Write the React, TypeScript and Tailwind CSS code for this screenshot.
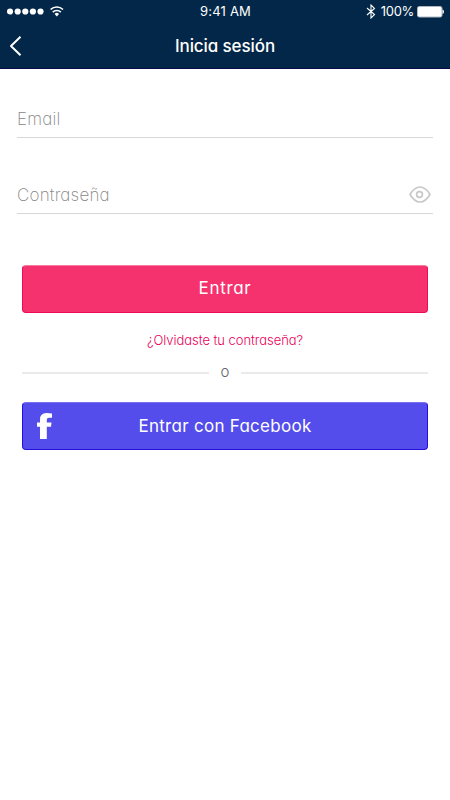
import { ReactNode } from "react";

const StatusBar = () => (
  <div className="flex h-[23px] items-center text-[13px] text-white">
    <div className="flex flex-1 items-center pl-[7px]">
      <svg width="60" height="14" viewBox="0 0 60 14" fill="currentColor">
        {[3, 10.7, 18.3, 25.9, 33.5].map((cx) => (
          <circle key={cx} cx={cx} cy="6.5" r="3.1" />
        ))}
        <g fill="none" stroke="currentColor" strokeWidth="1.7">
          <path d="M43.6 4.500a9 9 0 0 1 12.400 0" />
          <path d="M45.800 7.200a5.600 5.600 0 0 1 8 0" />
        </g>
        <path d="M47.600 8.900a3.200 3.200 0 0 1 4.400 0l-2.200 2.500z" />
      </svg>
    </div>
    <span className="tracking-[0.2px]">9:41 AM</span>
    <div className="flex flex-1 items-center justify-end pr-[6px]">
      <svg width="10" height="15" viewBox="0 0 10 15" fill="none" stroke="currentColor" strokeWidth="1.100">
        <path d="M1 4l7.500 6.600L5 14V1l3.500 3.400L1 11" />
      </svg>
      <span className="ml-[5px] tracking-[-0.300px]">100%</span>
      <svg className="ml-[3px]" width="27" height="12" viewBox="0 0 27 12">
        <rect x="0.500" y="0.500" width="24.500" height="10.500" rx="1.800" fill="#fff" stroke="#aeb8c2" />
        <path d="M25.500 3.500q1.500.500 1.500 2.200t-1.500 2.200z" fill="#fff" />
      </svg>
    </div>
  </div>
);

const Header = () => (
  <header className="h-[69px] border-b border-[#08084a] bg-[#022748]">
    <StatusBar />
    <div className="grid h-[45px] grid-cols-[40px_1fr_40px] items-center text-white">
      <svg className="ml-[8px]" width="15" height="22" viewBox="0 0 15 22" fill="none" stroke="currentColor" strokeWidth="2" strokeLinejoin="round">
        <path d="M12.500 1.800L3 11l9.500 9.200" />
      </svg>
      <h1 className="pt-[2px] text-center text-[17px] font-medium tracking-[-0.100px]">Inicia sesión</h1>
    </div>
  </header>
);

const Field = ({ label, children }: { label: string; children?: ReactNode }) => (
  <div className="flex h-[38px] items-center justify-between border-b border-[#d8d8d8] text-[17px] font-extralight text-[#858585]">
    <span className="pt-[2px] tracking-[0.200px]">{label}</span>
    {children}
  </div>
);

const EyeIcon = () => (
  <svg className="mr-[2px]" width="22" height="17" viewBox="0 0 22 17" fill="none" stroke="#c8c8c8" strokeWidth="1.700" strokeLinejoin="round">
    <path d="M1 8.500Q5.500 1 11 1t10 7.500Q16.500 16 11 16T1 8.500z" />
    <circle cx="10.500" cy="8.500" r="2.900" />
  </svg>
);

const App = () => {
  return (
    <div className="h-[800px] bg-white font-['Inter',sans-serif] [font-feature-settings:'cv11']">
      <Header />
      <main className="px-[17px] pt-[31px]">
        <div className="flex flex-col gap-[38px]">
          <Field label="Email" />
          <Field label="Contraseña">
            <EyeIcon />
          </Field>
        </div>
        <div className="mt-[51px] flex flex-col px-[5px]">
          <button className="h-[48px] w-[406px] rounded-[4px] border border-[#ee0a55] border-t-[#f57a9c] bg-[#f5326e] pb-[1px] text-[17px] tracking-[0.700px] text-white">
            Entrar
          </button>
          <a className="mt-[17px] block text-center text-[13px] leading-[20px] font-light tracking-[-0.050px] text-[#ea005c]">
            ¿Olvidaste tu contraseña?
          </a>
          <div className="mt-[13px] flex h-[20px] items-center font-light text-[#666]">
            <span className="h-[2px] flex-1 bg-[#e9eaea]" />
            <span className="w-[32px] pb-[2px] text-center text-[15px]">o</span>
            <span className="h-[2px] flex-1 bg-[#e9eaea]" />
          </div>
          <button className="mt-[19px] grid h-[48px] w-[406px] grid-cols-[44px_1fr_44px] items-center rounded-[4px] border border-[#2410dc] border-t-[#7770ef] bg-[#544dec] text-[17px] tracking-[0.280px] text-white">
            <svg className="ml-[13px]" width="18" height="28" viewBox="0 0 18 28" fill="currentColor">
              <path d="M4 27V14.800H1V10.500h3V7.500Q4 1 10.500 1q2.500 0 5.500.500v4.300H13Q10.800 5.800 10.800 7.800v2.700H15.500L15 14.800h-4.200V27z" />
            </svg>
            <span className="pt-[2px]">Entrar con Facebook</span>
          </button>
        </div>
      </main>
    </div>
  );
};

export default App;
